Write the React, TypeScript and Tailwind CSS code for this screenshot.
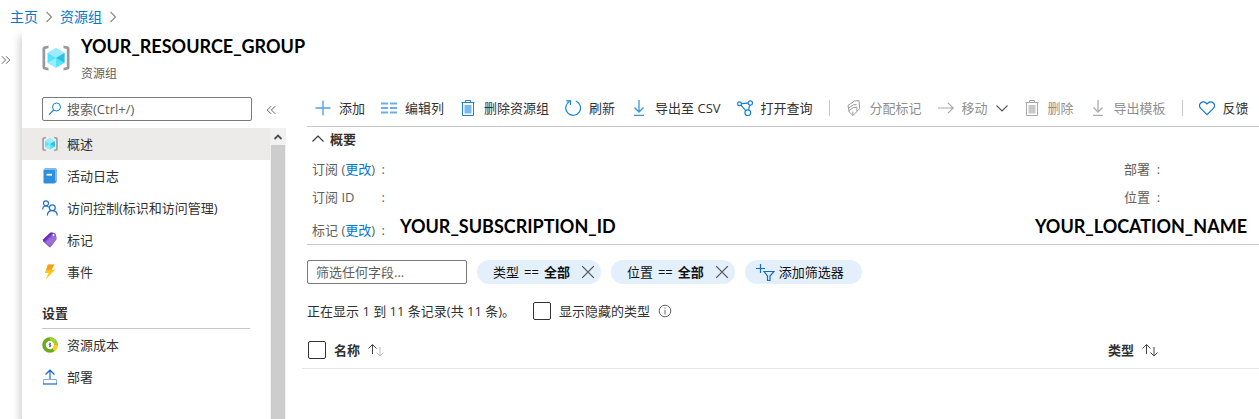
import React from 'react';

type IconProps = { className?: string };

function Svg({ className = 'size-4', box = '0 0 16 16', children }: { className?: string; box?: string; children: React.ReactNode }) {
  return (
    <svg className={`${className} shrink-0`} viewBox={box} fill="none" stroke="currentColor" aria-hidden="true">
      {children}
    </svg>
  );
}

function ResourceGroupIcon({ className }: IconProps) {
  return (
    <Svg className={className} box="0 0 28 28">
      <g stroke="none">
        <path fill="#999" d="M6.500 1.500 2 2.600Q.5 3 .5 4.500v19q0 1.500 1.500 1.900l4.500 1.100v-2.700L3.200 23V5l3.300-.8zM21.500 1.500 26 2.600q1.500.4 1.500 1.900v19q0 1.500-1.500 1.900l-4.500 1.100v-2.700l3.300-.8V5l-3.300-.8z" />
        <path fill="#50e6ff" d="M14 4 22.500 9v9.800L14 23.800l-8.500-5V9z" />
        <path fill="#9cebff" d="M14 4 22.500 9 14 14 5.500 9z" />
        <path fill="#9cebff" d="M14 14v9.800l-8.500-5z" />
        <path fill="#32bedd" d="M22.500 9v9.800L14 14z" />
      </g>
    </Svg>
  );
}

function BookIcon() {
  return (
    <Svg>
      <g stroke="none">
        <path fill="#0f6cbd" d="M3 .5h10.500q1 0 1 1v12q0 1-1 1H3z" />
        <path fill="#83bdf0" d="M3 .5h10.500q1 0 1 1v11.500l-1.500.5V2H1.500Q1.500.5 3 .5z" />
        <path fill="#2e8fdc" d="M1.500 2H13v12.500q0 1-1 1H2.500q-1 0-1-1z" />
        <path fill="#fff" d="M4.500 5.800h5.500v1.800H4.500z" />
      </g>
    </Svg>
  );
}

function PeopleIcon() {
  return (
    <Svg>
      <g stroke="#1f6bd6" strokeWidth="1.200">
        <circle cx="4" cy="3.300" r="2.500" />
        <path d="M.6 9.500C.8 7.300 2.200 6 4 6c1.200 0 2.200.5 2.800 1.400" />
        <circle cx="10.300" cy="7.800" r="2.900" />
        <path d="M5.300 15.500c.2-2.900 2.400-4.800 5-4.800s4.800 1.900 5 4.800" />
      </g>
    </Svg>
  );
}

function TagIcon() {
  return (
    <Svg>
      <g stroke="none">
        <path fill="#8a5cc9" d="M1.300 7.300 8 1q.5-.4 1-.4l3.300.3q1.200.1 1.400 1l1 4.300q.1.700-.3 1.200L9 14.800q-.9.900-1.800.3l-5.700-5.300q-.9-1-.2-2.500z" />
        <path fill="#6b2fc8" d="M1.300 7.300 8 1q.5-.4 1-.4l2.500.2L3 9.500l-1.500.3q-.9-1-.2-2.500z" />
        <path fill="#b796e8" d="m3.500 10 8-6 2.500 1 .2 1.800-6 7.500z" opacity=".35" />
        <circle cx="11.500" cy="2.900" r="1" fill="#fff" />
      </g>
    </Svg>
  );
}

function BoltIcon() {
  return (
    <Svg>
      <path stroke="none" fill="#ffc51a" d="M6 .5h6.500L9.500 5.800h3.700L3.500 15.500 6.500 9H2.800z" />
      <path stroke="none" fill="#f78d1e" d="M6 .5h6.500L9.500 5.800 4.200 6z" opacity=".7" />
    </Svg>
  );
}

function CostIcon() {
  return (
    <Svg>
      <g strokeWidth="3.600">
        <circle cx="8" cy="8" r="6" stroke="#68ab1c" />
        <path stroke="#a4cf2f" d="M8 2a6 6 0 0 1 6 6" />
        <path stroke="#ffd21f" d="M14 8a6 6 0 0 1-2.500 4.900" />
      </g>
      <path stroke="#555" strokeWidth=".9" d="M9 6.700H7.600q-.8.700 0 1.300h.8q.8.700 0 1.300H7M8 5.800v4.400" />
    </Svg>
  );
}

function DeployIcon() {
  return (
    <Svg>
      <path stroke="#1667d9" strokeWidth="1.200" d="M8 10V1.200M3.500 5.500 8 1.200l4.500 4.300" />
      <path stroke="#7db0ee" d="M1.500 15v-4.500h13V15" />
      <path stroke="#1667d9" strokeWidth="1.200" d="M1 15h14" />
    </Svg>
  );
}

const PlusIcon = () => <Svg><path stroke="#4f9fe0" strokeWidth="1.300" d="M8 .5v15M.5 8h15" /></Svg>;

const ColumnsIcon = () => (
  <Svg><path stroke="#6aaeea" strokeWidth="1.800" d="M0 3.500h7M9 3.500h7M0 8h7M9 8h7M0 12.500h7M9 12.500h7" /></Svg>
);

function TrashIcon({ muted = false }: { muted?: boolean }) {
  return (
    <Svg className={muted ? 'size-4 text-[#a8a8a8]' : 'size-4 text-[#1d7fd6]'}>
      <path d="M1.500 2.500h13M5.500 2.500V.5h5v2M2.500 2.500v13h11v-13" />
      <path stroke="none" fill={muted ? '#c8c8c8' : '#7ab8ee'} d="M4.500 5h7v8.500h-7z" />
    </Svg>
  );
}

const RefreshIcon = () => (
  <Svg className="size-4 text-[#1580d8]">
    <path strokeWidth="1.200" d="M10.800 1a7.400 7.400 0 1 1-6.400.5" />
    <path strokeWidth="1.200" d="M1.200.8h4.300V5" />
  </Svg>
);

function DownloadIcon({ muted = false }: { muted?: boolean }) {
  return (
    <Svg className={muted ? 'size-4 text-[#adadad]' : 'size-4 text-[#3b93dd]'}>
      <path strokeWidth="1.300" d="M8 0v12M3.500 7.500 8 12l4.500-4.500M3 15.400h10" />
    </Svg>
  );
}

const QueryIcon = () => (
  <Svg className="size-4 text-[#1580d8]">
    <g strokeWidth="1.200">
      <circle cx="2.500" cy="3.800" r="1.900" />
      <circle cx="13.300" cy="3" r="2.200" />
      <circle cx="10.800" cy="12.700" r="2.900" />
      <path d="M4.400 3.600 11 3.200M3.900 5.200l4.800 5.400M12.700 5.200l-1.200 4.600" />
    </g>
  </Svg>
);

const AssignTagIcon = () => (
  <Svg className="size-4 text-[#9a9a9a]">
    <path d="M2 5.500 8.500 1l4.500-.4.700 7.900-6.700 7-3.800-3.500z" />
    <path d="m2.200 8.500 5.300-3.700 3-.3M2.700 11l4.800-3.500 3.300-.3.200 4M7 15.500l-.2-4" />
  </Svg>
);

const ArrowIcon = () => (
  <Svg className="size-4 text-[#a8a8a8]"><path strokeWidth="1.200" d="M0 8h15M10 2.800 15.200 8 10 13.200" /></Svg>
);

const HeartIcon = () => (
  <Svg className="size-4 text-[#0f7ad4]">
    <path strokeWidth="1.200" d="M8 14.700 1.700 8.300a3.800 3.800 0 0 1 0-5.300 3.700 3.700 0 0 1 5.300 0l1 1 1-1a3.700 3.700 0 0 1 5.300 0 3.800 3.800 0 0 1 0 5.300z" />
  </Svg>
);

function Chevron({ d, className = 'size-3' }: { d: string; className?: string }) {
  return <Svg className={className} box="0 0 12 12"><path d={d} strokeWidth="1.100" /></Svg>;
}

function SortIcon({ faded = false }: { faded?: boolean }) {
  return (
    <Svg className="size-4 text-[#444]">
      <path d="M4.500 12V2.500M.5 6.500l4-4 4 4" />
      <path stroke={faded ? '#bdbdbd' : '#444'} d="M12 5v9M8.500 10.500l3.500 3.500 3.500-3.500" />
    </Svg>
  );
}

function ToolButton({ icon, label, disabled = false, children }: { icon: React.ReactNode; label: string; disabled?: boolean; children?: React.ReactNode }) {
  return (
    <button type="button" disabled={disabled} className="flex items-center gap-2 whitespace-nowrap text-[#323130] disabled:text-[#8f8f8f]">
      {icon}
      <span>{label}</span>
      {children}
    </button>
  );
}

function NavItem({ icon, label, active = false }: { icon: React.ReactNode; label: string; active?: boolean }) {
  return (
    <li>
      <a href="#" aria-current={active ? 'page' : undefined} className={`flex h-8 items-center gap-[9px] pl-5 ${active ? 'bg-[#edebe9]' : ''}`}>
        {icon}
        <span>{label}</span>
      </a>
    </li>
  );
}

function FilterPill({ field }: { field: string }) {
  return (
    <div className="flex h-6 items-center rounded-full bg-[#e3f0fb] pr-1.5 pl-4 whitespace-nowrap text-[#111]">
      <button type="button" className="flex gap-[5px]">
        <span>{field}</span>
        <span>==</span>
        <b className="font-bold">全部</b>
      </button>
      <button type="button" aria-label={`移除${field}`} className="ml-[11px] text-[#555]">
        <Chevron className="size-3.5" d="M1 1l10 10M11 1 1 11" />
      </button>
    </div>
  );
}

const ChangeLink = () => <>(<a href="#" className="text-[#0078d4]">更改</a>)</>;

function Term({ children }: { children: React.ReactNode }) {
  return (
    <dt className="flex w-[73px] shrink-0 justify-between whitespace-nowrap">
      <span>{children}</span>
      <span>:</span>
    </dt>
  );
}

const checkbox = 'size-[18px] shrink-0 appearance-none rounded-xs border border-[#323130] bg-white checked:bg-[#0078d4]';

export default function App() {
  return (
    <div className="flex min-h-screen flex-col bg-white font-['Open_Sans','Noto_Sans_CJK_SC',sans-serif] text-[13px] leading-5 text-[#323130]">
      <nav aria-label="breadcrumb" className="flex h-7 items-center gap-[5px] pt-1.5 pl-2.5 text-sm text-[#0078d4]">
        <a href="#">主页</a>
        <Chevron className="size-3 text-[#888]" d="M3.500 1 8.500 6l-5 5" />
        <a href="#">资源组</a>
        <Chevron className="size-3 text-[#888]" d="M3.500 1 8.500 6l-5 5" />
      </nav>

      <div className="flex flex-1">
        <div className="w-[22px] shrink-0 pt-[27px]">
          <button type="button" aria-label="展开菜单" className="block pl-px text-[#555]">
            <Chevron className="size-2.5" d="M1 1.500 5.500 6 1 10.500M6 1.500 10.500 6 6 10.500" />
          </button>
        </div>

        <div className="flex min-w-0 flex-1 flex-col shadow-[-2px_8px_8px_rgba(0,0,0,0.2)]">
          <header className="flex h-[59px] gap-[11px] bg-white pt-2 pl-5">
            <ResourceGroupIcon className="mt-2 size-7" />
            <div>
              <h1 className="font-[Lato,sans-serif] text-lg leading-5 font-bold text-black">YOUR_RESOURCE_GROUP</h1>
              <p className="mt-2 text-xs leading-5 text-[#605e5c]">资源组</p>
            </div>
          </header>

          <div className="flex flex-1">
            <aside className="flex w-[264px] shrink-0 flex-col">
              <div className="flex h-[41px] items-start gap-3.5 pt-2.5 pl-5">
                <label className="flex h-6 w-[210px] items-center gap-1 rounded-xs border border-[#7a7a7a] px-1 text-[#1580d8]">
                  <Svg className="size-4"><circle cx="9.500" cy="6" r="4" /><path d="M6.700 9 2 13.700" strokeWidth="1.200" /></Svg>
                  <input type="search" aria-label="搜索" placeholder="搜索(Ctrl+/)" className="w-full min-w-0 text-[#323130] outline-none placeholder:text-[#605e5c]" />
                </label>
                <button type="button" aria-label="折叠菜单" className="mt-2 text-[#555]">
                  <Chevron className="size-2.5" d="M11 1.500 6.500 6l4.500 4.500M6 1.500 1.500 6 6 10.500" />
                </button>
              </div>
              <div className="flex flex-1">
                <nav className="min-w-0 flex-1">
                  <ul>
                    <NavItem active icon={<ResourceGroupIcon className="size-4" />} label="概述" />
                    <NavItem icon={<BookIcon />} label="活动日志" />
                    <NavItem icon={<PeopleIcon />} label="访问控制(标识和访问管理)" />
                    <NavItem icon={<TagIcon />} label="标记" />
                    <NavItem icon={<BoltIcon />} label="事件" />
                  </ul>
                  <h2 className="mx-5 mt-[15px] border-b border-[#c8c8c8] pb-[5px] font-bold">设置</h2>
                  <ul>
                    <NavItem icon={<CostIcon />} label="资源成本" />
                    <NavItem icon={<DeployIcon />} label="部署" />
                  </ul>
                </nav>
                <div className="flex w-4 flex-col bg-[#f1f1f1] px-px" aria-hidden="true">
                  <div className="flex h-[17px] items-center justify-center text-[#505050]">
                    <Svg className="size-2.5" box="0 0 10 10"><path strokeWidth="1.800" d="M1.500 7 5 3.500 8.500 7" /></Svg>
                  </div>
                  <div className="flex-1 bg-[#cdcdcd]" />
                </div>
              </div>
            </aside>

            <main className="min-w-0 flex-1 pl-4">
              <div className="ml-[5px] flex min-h-10 flex-wrap items-center gap-x-4 border-b border-[#c8c8c8] pt-[3px] pl-2">
                <ToolButton icon={<PlusIcon />} label="添加" />
                <ToolButton icon={<ColumnsIcon />} label="编辑列" />
                <ToolButton icon={<TrashIcon />} label="删除资源组" />
                <ToolButton icon={<RefreshIcon />} label="刷新" />
                <ToolButton icon={<DownloadIcon />} label="导出至 CSV" />
                <ToolButton icon={<QueryIcon />} label="打开查询" />
                <span className="h-4 w-px bg-[#c8c8c8]" />
                <ToolButton disabled icon={<AssignTagIcon />} label="分配标记" />
                <ToolButton disabled icon={<ArrowIcon />} label="移动">
                  <Chevron className="size-3 text-[#555]" d="M.5 3.500 6 9l5.500-5.500" />
                </ToolButton>
                <ToolButton disabled icon={<TrashIcon muted />} label="删除" />
                <ToolButton disabled icon={<DownloadIcon muted />} label="导出模板" />
                <span className="h-4 w-px bg-[#c8c8c8]" />
                <ToolButton icon={<HeartIcon />} label="反馈" />
              </div>

              <section className="ml-[5px] border-b border-[#c8c8c8] pt-0.5 pb-1 pl-[5px]">
                <button type="button" className="flex items-center gap-1.5 font-bold">
                  <Chevron className="size-3" d="M.5 8.500 6 3l5.500 5.500" />
                  概要
                </button>
                <div className="flex justify-between pt-2.5 text-[#605e5c]">
                  <dl className="flex flex-col gap-2">
                    <div className="flex h-5"><Term>订阅 <ChangeLink /></Term></div>
                    <div className="flex h-5"><Term>订阅 ID</Term></div>
                    <div className="flex h-[25px] items-end gap-[15px]">
                      <Term>标记 <ChangeLink /></Term>
                      <dd className="self-start pt-px font-[Lato,sans-serif] text-lg leading-5 font-bold text-black">YOUR_SUBSCRIPTION_ID</dd>
                    </div>
                  </dl>
                  <dl className="flex flex-col gap-2 pr-3">
                    <div className="h-5 pl-[89px]"><dt>部署 &nbsp;:</dt></div>
                    <div className="h-5 pl-[89px]"><dt>位置 &nbsp;:</dt></div>
                    <dd className="pt-px font-[Lato,sans-serif] text-lg leading-5 font-bold text-black">YOUR_LOCATION_NAME</dd>
                  </dl>
                </div>
              </section>

              <div className="flex items-center gap-2.5 pt-[15px] pl-[5px]">
                <input type="text" aria-label="筛选任何字段" placeholder="筛选任何字段..." className="h-6 w-40 rounded-xs border border-[#7a7a7a] px-2 outline-none placeholder:text-[#605e5c]" />
                <FilterPill field="类型" />
                <FilterPill field="位置" />
                <button type="button" className="flex h-6 items-center gap-1 rounded-full bg-[#e3f0fb] pr-[18px] pl-2.5 whitespace-nowrap text-[#111]">
                  <Svg className="size-5 text-[#1667d9]" box="0 0 20 20">
                    <path strokeWidth="1.200" d="M5.500 2v9M1 6.500h9M9 9.500h10l-4 4.500v4.500h-2.500V14z" />
                  </Svg>
                  添加筛选器
                </button>
              </div>

              <div className="flex items-center pt-[17px] pl-[5px]">
                <p>正在显示 1 到 11 条记录(共 11 条)。</p>
                <label className="ml-[18px] flex items-center gap-2">
                  <input type="checkbox" className={checkbox} />
                  显示隐藏的类型
                </label>
                <Svg className="ml-2 size-3.5 text-[#666]" box="0 0 14 14"><circle cx="7" cy="7" r="5.800" /><path d="M7 6v4.500M7 3.500v1.300" /></Svg>
              </div>

              <table className="mt-[11px] w-full table-fixed border-b border-[#e6e6e6] text-left">
                <thead>
                  <tr className="h-9">
                    <th scope="col" className="w-8 pl-1.5"><input type="checkbox" aria-label="全选" className={`${checkbox} block`} /></th>
                    <th scope="col" className="p-0 font-bold">
                      <button type="button" className="flex items-center gap-2">名称 <SortIcon faded /></button>
                    </th>
                    <th scope="col" className="w-[151px] p-0 font-bold">
                      <button type="button" className="flex items-center gap-2">类型 <SortIcon /></button>
                    </th>
                  </tr>
                </thead>
              </table>
            </main>
          </div>
        </div>
      </div>
    </div>
  );
}
